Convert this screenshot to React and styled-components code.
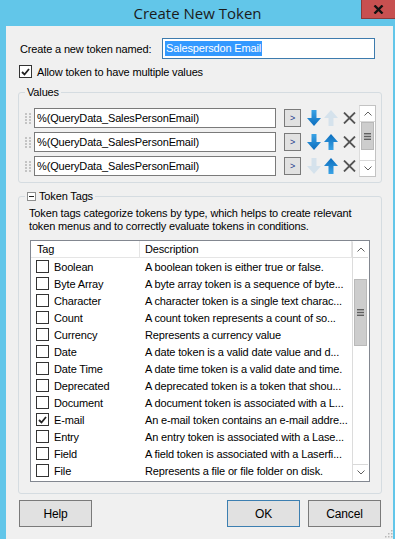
import React from "react";
import styled, { createGlobalStyle } from "styled-components";

const GlobalStyle = createGlobalStyle`
  html, body {
    margin: 0;
    padding: 0;
    background: #62c6e9;
  }
  body {
    font-family: "Liberation Sans", Arial, sans-serif;
    font-size: 11px;
    letter-spacing: -0.15px;
    color: #000;
  }
`;

const values = [
  { down: true, up: false },
  { down: true, up: true },
  { down: false, up: true },
];

const tags = [
  { name: "Boolean", desc: "A boolean token is either true or false." },
  { name: "Byte Array", desc: "A byte array token is a sequence of byte..." },
  { name: "Character", desc: "A character token is a single text charac..." },
  { name: "Count", desc: "A count token represents a count of so..." },
  { name: "Currency", desc: "Represents a currency value" },
  { name: "Date", desc: "A date token is a valid date value and d..." },
  { name: "Date Time", desc: "A date time token is a valid date and time." },
  { name: "Deprecated", desc: "A deprecated token is a token that shou..." },
  { name: "Document", desc: "A document token is associated with a L..." },
  { name: "E-mail", desc: "An e-mail token contains an e-mail addre...", checked: true },
  { name: "Entry", desc: "An entry token is associated with a Lase..." },
  { name: "Field", desc: "A field token is associated with a Laserfi..." },
  { name: "File", desc: "Represents a file or file folder on disk." },
  { name: "", desc: "" },
];

const Window = styled.div`
  position: relative;
  width: 395px;
  height: 539px;
  display: flex;
  flex-direction: column;
  background: #62c6e9;
  overflow: hidden;
`;

const TitleBar = styled.div`
  position: relative;
  height: 26px;
  flex: none;
  display: flex;
  align-items: center;
  justify-content: center;
  font-family: "Open Sans", "Noto Sans", sans-serif;
  font-size: 15px;
  letter-spacing: 0;
  color: #1b1b1b;
  padding-bottom: 1px;
  box-sizing: border-box;
`;

const CloseButton = styled.div`
  position: absolute;
  top: 0;
  right: 0;
  width: 33px;
  height: 18px;
  background: #c75050;
  border: 1px solid #8a3a3a;
  border-top: none;
  border-right: none;
  display: flex;
  align-items: center;
  justify-content: center;
`;

const Body = styled.div`
  flex: 1;
  margin: 0 2px 0 6px;
  background: #f0f0f0;
  padding: 12px 11px 0 12px;
  display: flex;
  flex-direction: column;
`;

const NameRow = styled.div`
  display: flex;
  align-items: center;
  height: 21px;
`;

const NameLabel = styled.span`
  width: 142px;
  margin-left: 2px;
`;

const NameBox = styled.div`
  width: 213px;
  height: 21px;
  box-sizing: border-box;
  border: 1px solid #3d7bad;
  background: #fff;
  display: flex;
  align-items: center;
  padding-left: 2px;
`;

const Selected = styled.span`
  background: #3399ff;
  color: #fff;
  line-height: 15px;
  padding: 0 1px;
`;

const CheckRow = styled.label`
  display: flex;
  align-items: center;
  gap: 5px;
  margin: 6px 0 0 1px;
  height: 13px;
`;

const Box = styled.span`
  width: 13px;
  height: 13px;
  box-sizing: border-box;
  border: 1px solid #333;
  background: #fff;
  flex: none;
  display: flex;
  align-items: center;
  justify-content: center;
`;

const Group = styled.fieldset`
  margin: ${(p) => p.$top}px 0 0;
  padding: ${(p) => p.$pad};
  border: 1px solid #d5dce1;
  border-radius: 3px;
  min-width: 0;
`;

const Legend = styled.legend`
  padding: 0 2px;
  margin-left: ${(p) => p.$offset || 0}px;
  line-height: 13px;
  display: flex;
  align-items: center;
  gap: 3px;
`;

const Minus = styled.span`
  width: 9px;
  height: 9px;
  box-sizing: border-box;
  border: 1px solid #8e8f8f;
  background: #fff;
  display: flex;
  align-items: center;
  justify-content: center;
  &::after {
    content: "";
    width: 5px;
    height: 1px;
    background: #222;
  }
`;

const ValuesArea = styled.div`
  display: flex;
  justify-content: space-between;
`;

const ValueRows = styled.div`
  display: flex;
  flex-direction: column;
  gap: 4px;
  margin-top: 3px;
`;

const ValueRow = styled.div`
  display: flex;
  align-items: center;
  height: 20px;
`;

const TextBox = styled.div`
  width: 242px;
  height: 20px;
  box-sizing: border-box;
  border: 1px solid #7a7a7a;
  background: #fff;
  margin-left: 3px;
  padding-left: 2px;
  display: flex;
  align-items: center;
  white-space: nowrap;
`;

const SmallButton = styled.div`
  width: 17px;
  height: 18px;
  box-sizing: border-box;
  margin-left: 8px;
  background: #e1e1e1;
  border: 1px solid #7a7a7a;
  display: flex;
  align-items: center;
  justify-content: center;
  font-size: 9px;
  color: #1e3c8c;
`;

const IconSlot = styled.span`
  display: flex;
  margin-left: ${(p) => p.$gap}px;
`;

const Scrollbar = styled.div`
  width: 17px;
  height: ${(p) => p.$height}px;
  box-sizing: border-box;
  border: 1px solid ${(p) => (p.$framed ? "#c3c3c3" : "transparent")};
  border-left: 1px solid #dcdcdc;
  background: #fff;
  display: flex;
  flex-direction: column;
  flex: none;
`;

const ScrollButton = styled.div`
  height: 16px;
  flex: none;
  box-sizing: border-box;
  display: flex;
  align-items: center;
  justify-content: center;
  border-${(p) => (p.$down ? "top" : "bottom")}: 1px solid #d9d9d9;
`;

const Track = styled.div`
  flex: 1;
  padding-top: ${(p) => p.$offset}px;
`;

const Thumb = styled.div`
  height: ${(p) => p.$size}px;
  box-sizing: border-box;
  margin: 0 1px;
  background: #cdcdcd;
  border: 1px solid #b9b9b9;
  display: flex;
  align-items: center;
  justify-content: center;
`;

const Intro = styled.p`
  margin: 0;
  line-height: 13px;
`;

const List = styled.div`
  margin: 7px 0 0 1px;
  width: 340px;
  height: 242px;
  box-sizing: border-box;
  border: 1px solid #828790;
  background: #fff;
  display: flex;
  overflow: hidden;
`;

const ListBody = styled.div`
  flex: 1;
  overflow: hidden;
`;

const HeaderRow = styled.div`
  display: flex;
  height: 17px;
  box-sizing: border-box;
  border-bottom: 1px solid #e5e5e5;
  align-items: center;
`;

const HeadCell = styled.div`
  width: ${(p) => (p.$first ? "109px" : "auto")};
  flex: ${(p) => (p.$first ? "none" : "1")};
  height: 100%;
  box-sizing: border-box;
  padding-left: ${(p) => (p.$first ? 6 : 5)}px;
  border-right: 1px solid #e5e5e5;
  display: flex;
  align-items: center;
`;

const TagRow = styled.div`
  display: flex;
  align-items: center;
  height: 17px;
  white-space: nowrap;
`;

const TagCell = styled.div`
  width: 109px;
  flex: none;
  display: flex;
  align-items: center;
  gap: 5px;
  padding-left: 5px;
  box-sizing: border-box;
`;

const DescCell = styled.div`
  padding-left: 5px;
  min-width: 0;
`;

const ButtonRow = styled.div`
  display: flex;
  margin: 6px 1px 0 1px;
  gap: 8px;
`;

const Button = styled.div`
  width: 73px;
  height: 27px;
  box-sizing: border-box;
  background: #e1e1e1;
  border: 1px solid ${(p) => (p.$default ? "#3c7fb1" : "#7a7a7a")};
  display: flex;
  align-items: center;
  justify-content: center;
  font-size: 12px;
  margin-left: ${(p) => (p.$push ? "auto" : "0")};
`;

const Grip = styled.svg`
  position: absolute;
  right: 2px;
  bottom: 1px;
`;

const Check = () => (
  <svg width="9" height="8" viewBox="0 0 9 8">
    <path d="M1 4 L3.5 6.5 L8 1" fill="none" stroke="#222" strokeWidth="1.8" />
  </svg>
);

const Dots = () => (
  <svg width="6" height="11" viewBox="0 0 6 11">
    {[0, 3, 6, 9].map((y) =>
      [0, 4].map((x) => <rect key={`${x}-${y}`} x={x} y={y} width="2" height="2" fill="#c4c4c4" />)
    )}
  </svg>
);

const Arrow = ({ up, on }) => (
  <svg width="14" height="16" viewBox="0 0 14 16">
    <defs>
      <linearGradient id="ag" x1="0" y1="0" x2="0" y2="1">
        <stop offset="0" stopColor="#3aa3e6" />
        <stop offset="1" stopColor="#0b6dbd" />
      </linearGradient>
    </defs>
    <path
      d="M4.5 0 H9.5 V8 H14 L7 16 L0 8 H4.5 Z"
      transform={up ? "rotate(180 7 8)" : undefined}
      fill={on ? "url(#ag)" : "#d5e2ec"}
    />
  </svg>
);

const Cross = () => (
  <svg width="13" height="12" viewBox="0 0 13 12">
    <path d="M1 0.5 L12 11.5 M12 0.5 L1 11.5" stroke="#555" strokeWidth="1.8" />
  </svg>
);

const Chevron = ({ down }) => (
  <svg width="8" height="5" viewBox="0 0 8 5">
    <path d={down ? "M0.5 0.5 L4 4 L7.5 0.5" : "M0.5 4.5 L4 1 L7.5 4.5"} fill="none" stroke="#606060" strokeWidth="1" />
  </svg>
);

const Lines = () => (
  <svg width="7" height="7" viewBox="0 0 7 7">
    <rect y="0" width="7" height="1.4" fill="#606060" />
    <rect y="2.8" width="7" height="1.4" fill="#606060" />
    <rect y="5.6" width="7" height="1.4" fill="#606060" />
  </svg>
);

const ScrollBar = ({ height, offset, size, framed }) => (
  <Scrollbar $height={height} $framed={framed}>
    <ScrollButton>
      <Chevron />
    </ScrollButton>
    <Track $offset={offset}>
      <Thumb $size={size}>
        <Lines />
      </Thumb>
    </Track>
    <ScrollButton $down>
      <Chevron down />
    </ScrollButton>
  </Scrollbar>
);

export default function App() {
  return (
    <Window>
      <GlobalStyle />
      <TitleBar>
        Create New Token
        <CloseButton>
          <svg width="11" height="9" viewBox="0 0 11 9">
            <path d="M1.5 0.5 L9.5 8.5 M9.5 0.5 L1.5 8.5" stroke="#111" strokeWidth="2.4" />
          </svg>
        </CloseButton>
      </TitleBar>
      <Body>
        <NameRow>
          <NameLabel>Create a new token named:</NameLabel>
          <NameBox>
            <Selected>Salespersdon Email</Selected>
          </NameBox>
        </NameRow>
        <CheckRow>
          <Box>
            <Check />
          </Box>
          Allow token to have multiple values
        </CheckRow>

        <Group $top={8} $pad="6px 5px 5px 6px">
          <Legend>Values</Legend>
          <ValuesArea>
            <ValueRows>
              {values.map((v, i) => (
                <ValueRow key={i}>
                  <Dots />
                  <TextBox>%(QueryData_SalesPersonEmail)</TextBox>
                  <SmallButton>&gt;</SmallButton>
                  <IconSlot $gap={6}>
                    <Arrow on={v.down} />
                  </IconSlot>
                  <IconSlot $gap={3}>
                    <Arrow up on={v.up} />
                  </IconSlot>
                  <IconSlot $gap={5}>
                    <Cross />
                  </IconSlot>
                </ValueRow>
              ))}
            </ValueRows>
            <ScrollBar height={72} offset={0} size={28} framed />
          </ValuesArea>
        </Group>

        <Group $top={7} $pad="4px 11px 11px 10px">
          <Legend $offset={-4}>
            <Minus />
            Token Tags
          </Legend>
          <Intro>
            Token tags categorize tokens by type, which helps to create relevant
            <br />
            token menus and to correctly evaluate tokens in conditions.
          </Intro>
          <List>
            <ListBody>
              <HeaderRow>
                <HeadCell $first>Tag</HeadCell>
                <HeadCell>Description</HeadCell>
              </HeaderRow>
              {tags.map((t, i) => (
                <TagRow key={i}>
                  <TagCell>
                    <Box>{t.checked && <Check />}</Box>
                    {t.name}
                  </TagCell>
                  <DescCell>{t.desc}</DescCell>
                </TagRow>
              ))}
            </ListBody>
            <ScrollBar height={240} offset={21} size={67} />
          </List>
        </Group>

        <ButtonRow>
          <Button>Help</Button>
          <Button $default $push>
            OK
          </Button>
          <Button>Cancel</Button>
        </ButtonRow>
      </Body>
      <Grip width="9" height="9" viewBox="0 0 9 9">
        {[
          [7, 1], [7, 4], [4, 4], [7, 7], [4, 7], [1, 7],
        ].map(([x, y]) => (
          <rect key={`${x}${y}`} x={x} y={y} width="1.5" height="1.5" fill="#b8b8b8" />
        ))}
      </Grip>
    </Window>
  );
}
